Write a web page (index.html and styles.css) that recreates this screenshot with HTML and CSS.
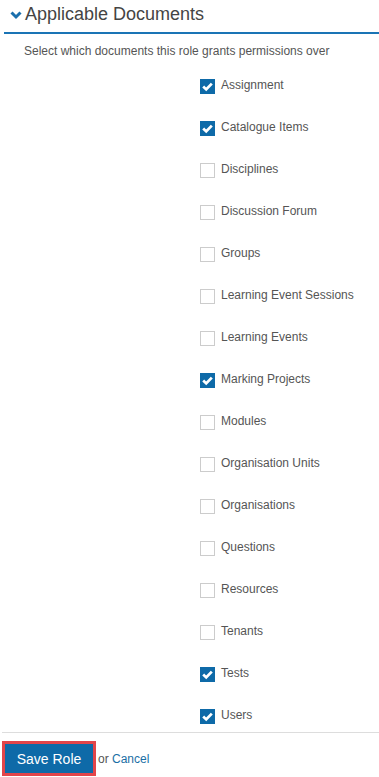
FILE: index.html
```
<!DOCTYPE html>
<html>
<head>
<meta charset="utf-8">
<link rel="stylesheet" href="styles.css">
</head>
<body>
<div class="page">
  <div class="section-head">
    <svg class="chev" width="12" height="10" viewBox="0 0 12 10"><polyline points="1.5,2.5 6,7 10.5,2.5" fill="none" stroke="#1a6fad" stroke-width="3"/></svg>
    <span class="title">Applicable Documents</span>
  </div>
  <p class="hint">Select which documents this role grants permissions over</p>
  <ul class="docs">
    <li class="doc"><span class="box on"><svg width="15" height="15" viewBox="0 0 15 15"><polyline points="3.2,7.6 6.2,10.4 11.8,4.6" fill="none" stroke="#fff" stroke-width="2.8"/></svg></span><span class="lbl">Assignment</span></li>
    <li class="doc"><span class="box on"><svg width="15" height="15" viewBox="0 0 15 15"><polyline points="3.2,7.6 6.2,10.4 11.8,4.6" fill="none" stroke="#fff" stroke-width="2.8"/></svg></span><span class="lbl">Catalogue Items</span></li>
    <li class="doc"><span class="box"></span><span class="lbl">Disciplines</span></li>
    <li class="doc"><span class="box"></span><span class="lbl">Discussion Forum</span></li>
    <li class="doc"><span class="box"></span><span class="lbl">Groups</span></li>
    <li class="doc"><span class="box"></span><span class="lbl">Learning Event Sessions</span></li>
    <li class="doc"><span class="box"></span><span class="lbl">Learning Events</span></li>
    <li class="doc"><span class="box on"><svg width="15" height="15" viewBox="0 0 15 15"><polyline points="3.2,7.6 6.2,10.4 11.8,4.6" fill="none" stroke="#fff" stroke-width="2.8"/></svg></span><span class="lbl">Marking Projects</span></li>
    <li class="doc"><span class="box"></span><span class="lbl">Modules</span></li>
    <li class="doc"><span class="box"></span><span class="lbl">Organisation Units</span></li>
    <li class="doc"><span class="box"></span><span class="lbl">Organisations</span></li>
    <li class="doc"><span class="box"></span><span class="lbl">Questions</span></li>
    <li class="doc"><span class="box"></span><span class="lbl">Resources</span></li>
    <li class="doc"><span class="box"></span><span class="lbl">Tenants</span></li>
    <li class="doc"><span class="box on"><svg width="15" height="15" viewBox="0 0 15 15"><polyline points="3.2,7.6 6.2,10.4 11.8,4.6" fill="none" stroke="#fff" stroke-width="2.8"/></svg></span><span class="lbl">Tests</span></li>
    <li class="doc"><span class="box on"><svg width="15" height="15" viewBox="0 0 15 15"><polyline points="3.2,7.6 6.2,10.4 11.8,4.6" fill="none" stroke="#fff" stroke-width="2.8"/></svg></span><span class="lbl">Users</span></li>
  </ul>
  <div class="actions">
    <button class="save">Save Role</button>
    <span class="or">or <a class="cancel">Cancel</a></span>
  </div>
</div>
</body>
</html>
```
FILE: styles.css
```
html, body {
  margin: 0;
  padding: 0;
  background: #fff;
}
body {
  font-family: "Liberation Sans", Arial, sans-serif;
  color: #555;
}
.page {
  padding-left: 4px;
}
.section-head {
  display: flex;
  align-items: center;
  height: 28px;
  padding-bottom: 4px;
  border-bottom: 2px solid #1a74b5;
  padding-left: 6px;
}
.chev {
  display: block;
  margin-right: 3px;
  margin-top: 1px;
}
.title {
  font-size: 18px;
  color: #444;
}
.hint {
  margin: 0;
  padding: 10px 0 0 20px;
  font-size: 12px;
  line-height: 15px;
  color: #555;
}
.docs {
  list-style: none;
  margin: 0;
  padding: 20px 0 0 196px;
  display: flex;
  flex-direction: column;
  gap: 27px;
}
.doc {
  display: flex;
  align-items: center;
  height: 15px;
}
.box {
  width: 15px;
  height: 15px;
  box-sizing: border-box;
  border: 1px solid #ccc;
  background: #fff;
  flex: none;
  display: block;
}
.box.on {
  border: none;
  background: #0e6aa8;
}
.box svg {
  display: block;
}
.lbl {
  margin-left: 6px;
  font-size: 12px;
  color: #555;
  margin-top: -3px;
}
.actions {
  margin-top: 8px;
  border-top: 1px solid #ddd;
  padding-top: 8px;
  display: flex;
  align-items: center;
  margin-left: -2px;
}
.save {
  font-family: "Liberation Sans", Arial, sans-serif;
  font-size: 14px;
  color: #fff;
  background: #0e6aa8;
  border: 3px solid #e2454a;
  height: 35px;
  width: 94px;
  padding: 0;
  margin: 0;
}
.or {
  margin-left: 2px;
  font-size: 12px;
  color: #555;
}
.cancel {
  color: #1a6fa5;
}
```
